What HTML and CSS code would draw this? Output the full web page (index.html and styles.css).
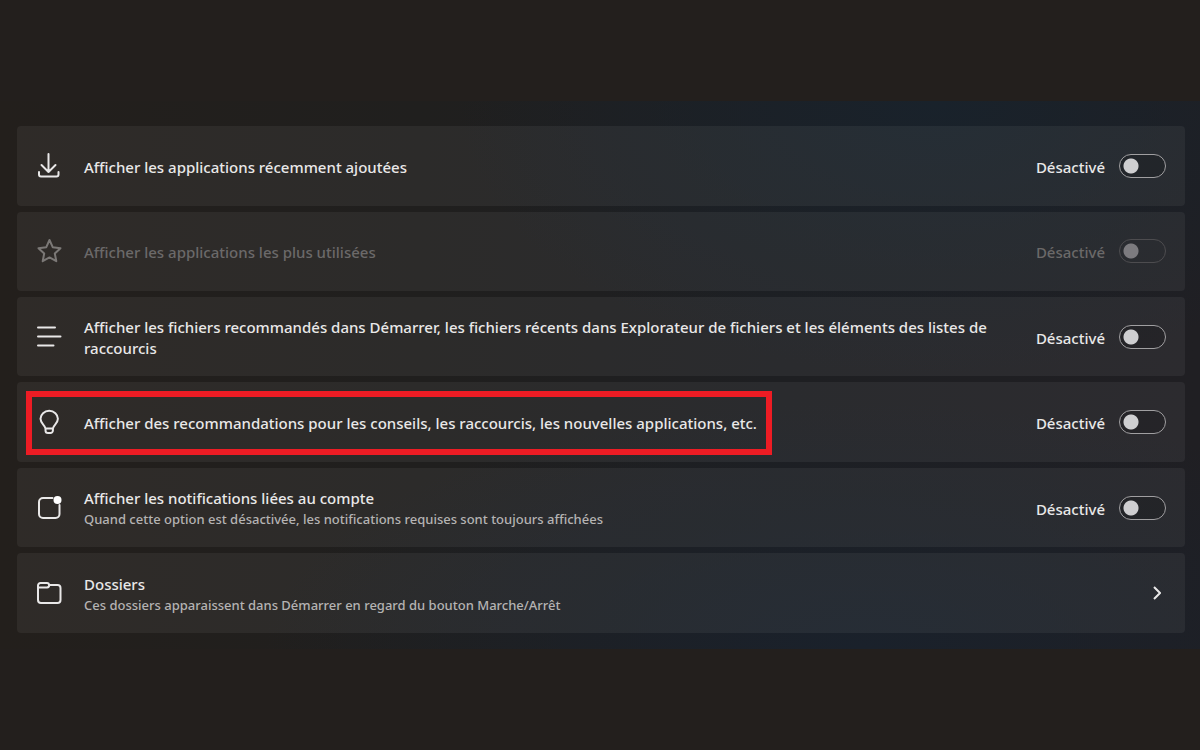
FILE: index.html
```html
<!DOCTYPE html>
<html lang="fr">
<head>
    <meta charset="UTF-8">
    <meta name="viewport" content="width=device-width, initial-scale=1.0">
    <title>Personnalisation - Démarrer</title>
    <link rel="stylesheet" href="styles.css">
</head>
<body>
    <main class="panel">
        <label class="card">
            <span class="info">
                <svg class="icon" viewBox="0 0 24 24">
                    <path d="M11.5 0v18M4.500 11l7 7 7-7M2 18v2.500a2 2 0 0 0 2 2h15.500a2 2 0 0 0 2-2V18"/>
                </svg>
                <span class="text">
                    <span class="title">Afficher les applications récemment ajoutées</span>
                </span>
            </span>
            <span class="state"><span class="text">Désactivé</span> <input class="toggle" type="checkbox" role="switch"></span>
        </label>

        <label class="card disabled">
            <span class="info">
                <svg class="icon" viewBox="0 0 24 24">
                    <path d="M12.500 1l3.200 7.200 7.800 1-5.700 5.300 1.500 7.700-6.800-3.800-6.800 3.800 1.500-7.700-5.700-5.300 7.800-1z"/>
                </svg>
                <span class="text">
                    <span class="title">Afficher les applications les plus utilisées</span>
                </span>
            </span>
            <span class="state"><span class="text">Désactivé</span> <input class="toggle" type="checkbox" role="switch" disabled></span>
        </label>

        <label class="card">
            <span class="info">
                <svg class="icon" viewBox="0 0 24 24">
                    <path d="M1 2.500h17M1 11.500h22.500M1 20.500h15.500"/>
                </svg>
                <span class="text">
                    <span class="title">Afficher les fichiers recommandés dans Démarrer, les fichiers récents dans Explorateur de fichiers et les éléments des listes de raccourcis</span>
                </span>
            </span>
            <span class="state"><span class="text">Désactivé</span> <input class="toggle" type="checkbox" role="switch"></span>
        </label>

        <label class="card">
            <span class="info highlight">
                <svg class="icon" viewBox="0 0 24 24">
                    <path d="M8.500 18.500C8 15 3.500 13.500 3.500 8.800a8.700 8 0 0 1 17.400 0c0 4.700-4.500 6.200-5 9.700zM8.500 18.500v2a2.500 2.500 0 0 0 2.500 2.500h2.400a2.500 2.500 0 0 0 2.500-2.500v-2"/>
                </svg>
                <span class="text">
                    <span class="title">Afficher des recommandations pour les conseils, les raccourcis, les nouvelles applications, etc.</span>
                </span>
            </span>
            <span class="state"><span class="text">Désactivé</span> <input class="toggle" type="checkbox" role="switch"></span>
        </label>

        <label class="card">
            <span class="info">
                <svg class="icon" viewBox="0 0 24 24">
                    <path d="M15.500 2H6a4 4 0 0 0-4 4v12a4 4 0 0 0 4 4h12.500a4 4 0 0 0 4-4V9"/>
                    <circle class="dot" cx="20.500" cy="4" r="4"/>
                </svg>
                <span class="text">
                    <span class="title">Afficher les notifications liées au compte</span>
                    <span class="subtitle">Quand cette option est désactivée, les notifications requises sont toujours affichées</span>
                </span>
            </span>
            <span class="state"><span class="text">Désactivé</span> <input class="toggle" type="checkbox" role="switch"></span>
        </label>

        <a class="card" href="#dossiers">
            <span class="info">
                <svg class="icon" viewBox="0 0 24 24">
                    <path d="M1 6V4.500a2.500 2.500 0 0 1 2.500-2.500h6.500a2 2 0 0 1 2 2H20.500a3 3 0 0 1 3 3V19a3 3 0 0 1-3 3H4a3 3 0 0 1-3-3zM1 6.500h9a2.500 2.500 0 0 0 2.200-2.500"/>
                </svg>
                <span class="text">
                    <span class="title">Dossiers</span>
                    <span class="subtitle">Ces dossiers apparaissent dans Démarrer en regard du bouton Marche/Arrêt</span>
                </span>
            </span>
            <svg class="chevron" viewBox="0 0 8 14">
                <path d="M1 1l6 6-6 6"/>
            </svg>
        </a>
    </main>
</body>
</html>
```

FILE: styles.css
```css
* {
    margin: 0;
    padding: 0;
    box-sizing: border-box;
}

body {
    min-height: 100vh;
    display: flex;
    align-items: center;
    background: #231f1d;
    color: #e9e8e8;
    font-family: "Segoe UI", "Noto Sans", sans-serif;
    font-size: 15px;
    font-weight: 500;
    line-height: 21px;
}

.panel {
    width: 100%;
    min-height: 73vh;
    padding: 25px 15px 16px 17px;
    display: grid;
    grid-auto-rows: 1fr;
    gap: 6px;
    background:
        radial-gradient(ellipse 40% 50% at 78% 0%, #19222b, transparent),
        radial-gradient(ellipse 50% 45% at 72% 100%, #1a212b, transparent),
        linear-gradient(to right, #231f1c, #201f1e 35%, #1e1f22 65%, #201f23);
}

.card {
    padding: 8px 19px 8px 20px;
    display: flex;
    align-items: center;
    justify-content: space-between;
    gap: 24px;
    border-radius: 4px;
    background: rgba(255, 255, 255, 0.055);
    color: inherit;
    text-decoration: none;
}

.info {
    display: flex;
    align-items: center;
    gap: 23px;
}

.icon {
    width: 24px;
    height: 24px;
    flex-shrink: 0;
    fill: none;
    stroke: #e9e8e8;
    stroke-width: 2;
    stroke-linejoin: round;
    stroke-linecap: round;
    overflow: visible;
}

.icon .dot {
    fill: #fff;
    stroke: none;
}

.text {
    padding-top: 3px;
}

.title,
.subtitle {
    display: block;
}

.subtitle {
    color: #b5b3b3;
    font-size: 13px;
}

/* cadre rouge autour de l'option */
.highlight {
    position: relative;
}

.highlight::after {
    content: '';
    position: absolute;
    inset: -19px -15px -21px -11px;
    border: 6px solid #ed1c24;
    pointer-events: none;
}

.state {
    display: flex;
    align-items: center;
    gap: 14px;
    flex-shrink: 0;
}

.toggle {
    appearance: none;
    width: 47px;
    height: 24px;
    border: 1px solid #a09fa1;
    border-radius: 12px;
    background: radial-gradient(circle at 11px 11px, #cfcfd1 7px, transparent 8px), rgba(0, 0, 0, 0.15);
}

.disabled .title,
.disabled .state {
    color: #6b6969;
}

.disabled .icon {
    stroke: #7b7876;
}

.disabled .toggle {
    border-color: #4d4c4f;
    background: radial-gradient(circle at 11px 11px, #7c7b7f 7px, transparent 8px);
}

.chevron {
    width: 8px;
    height: 14px;
    margin-right: 5px;
    fill: none;
    stroke: #e9e8e8;
    stroke-width: 2;
}
```
